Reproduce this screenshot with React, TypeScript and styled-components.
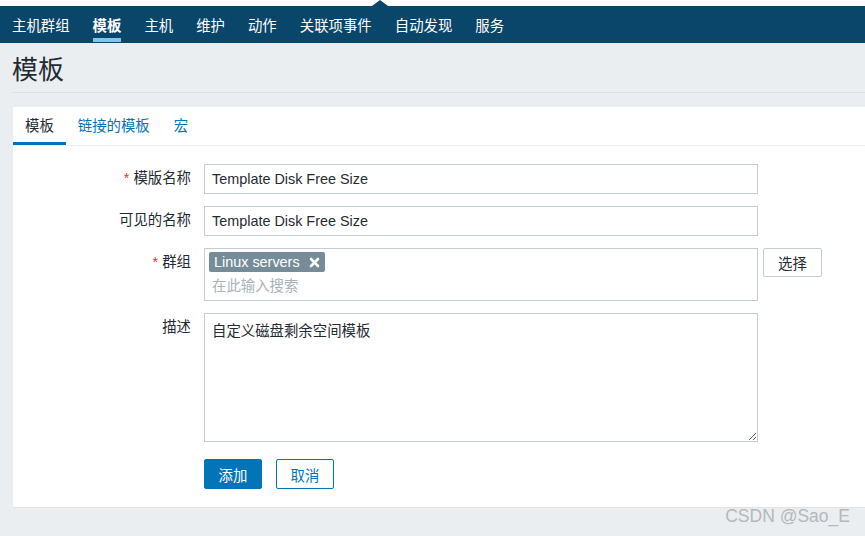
import React from 'react'
import styled, { createGlobalStyle } from 'styled-components'

const GlobalStyle = createGlobalStyle`
    html, body {
        margin: 0;
        padding: 0;
        background: #ebeef0;
    }
    body {
        font-family: "Liberation Sans", "Noto Sans CJK SC", Arial, sans-serif;
        font-size: 14.4px;
        color: #1f2c33;
    }
`

const PAGE = styled.div`
    position: relative;
    min-height: 536px;
    padding-top: 6px;
    background: linear-gradient(#ffffff 0, #ffffff 6px, #ebeef0 6px);
    box-sizing: border-box;
`

const NAVBAR = styled.nav`
    position: relative;
    display: flex;
    align-items: stretch;
    height: 37px;
    padding-left: 12px;
    background: #0a466a;
`

const NOTCH = styled.div`
    position: absolute;
    left: 372px;
    top: -6px;
    width: 0;
    height: 0;
    border-left: 8px solid transparent;
    border-right: 8px solid transparent;
    border-bottom: 6px solid #0a466a;
`

const NAVITEM = styled.a<{ active?: boolean }>`
    position: relative;
    display: flex;
    align-items: center;
    margin-right: 23px;
    font-size: 14.4px;
    color: #ffffff;
    font-weight: ${props => props.active ? 'bold' : 'normal'};
    text-decoration: none;
    cursor: pointer;

    &::after {
        content: '';
        display: ${props => props.active ? 'block' : 'none'};
        position: absolute;
        left: 0;
        right: 0;
        bottom: 1px;
        height: 4px;
        background: #7cc7f0;
    }
`

const MAIN = styled.main`
    padding-left: 12px;
`

const HEADER = styled.header`
    display: flex;
    align-items: center;
    height: 49px;
    border-bottom: 1px solid #dbe1e5;
`

const TITLE = styled.h1`
    margin: 0;
    font-size: 26px;
    font-weight: normal;
    color: #1f2c33;
`

const CARD = styled.section`
    margin: 14px 0 0 1px;
    background: #ffffff;
    border-bottom: 1px solid #dde3e6;
    padding-bottom: 18px;
`

const TABBAR = styled.div`
    display: flex;
    height: 38px;
    border-bottom: 1px solid #ebeef0;
`

const TAB = styled.a<{ active?: boolean }>`
    display: flex;
    align-items: center;
    padding: 0 12px;
    font-size: 14.4px;
    color: ${props => props.active ? '#1f2c33' : '#0275b8'};
    border-bottom: 3px solid ${props => props.active ? '#0275b8' : 'transparent'};
    cursor: pointer;
`

const FORM = styled.div`
    display: grid;
    grid-template-columns: 178px 554px auto;
    column-gap: 13px;
    row-gap: 12px;
    padding-top: 18px;
    align-items: start;
`

const LABEL = styled.label`
    text-align: right;
    line-height: 29px;
    font-size: 14.4px;
    color: #1f2c33;
`

const REQUIRED = styled.span`
    color: #e33734;
    margin-right: 4px;
`

const TEXTINPUT = styled.input`
    box-sizing: border-box;
    width: 100%;
    height: 30px;
    margin: 0;
    padding: 0 7px;
    border: 1px solid #c3ccd1;
    font-family: inherit;
    font-size: 14.4px;
    color: #1f2c33;
    background: #ffffff;
    outline: none;
`

const MULTISELECT = styled.div`
    box-sizing: border-box;
    height: 53px;
    padding: 3px 4px;
    border: 1px solid #c3ccd1;
    display: flex;
    flex-direction: column;
    gap: 3px;
`

const TAG = styled.span`
    align-self: flex-start;
    display: inline-flex;
    align-items: center;
    gap: 9px;
    height: 22px;
    padding: 0 5px 0 5px;
    border-radius: 2px;
    background: #768d99;
    color: #ffffff;
    font-size: 14.4px;
`

const PLACEHOLDER = styled.span`
    padding-left: 3px;
    line-height: 22px;
    color: #a8b3b9;
    font-size: 14.4px;
`

const SELECTBUTTON = styled.button`
    box-sizing: border-box;
    justify-self: start;
    margin-left: -8px;
    width: 59px;
    height: 29px;
    border: 1px solid #c3ccd1;
    border-radius: 2px;
    background: #ffffff;
    font-family: inherit;
    font-size: 14.4px;
    color: #1f2c33;
`

const TEXTAREA = styled.textarea`
    box-sizing: border-box;
    display: block;
    width: 100%;
    height: 129px;
    margin: 0;
    padding: 5px 7px;
    border: 1px solid #c3ccd1;
    font-family: inherit;
    font-size: 14.4px;
    color: #1f2c33;
    resize: both;
    outline: none;
`

const BUTTONROW = styled.div`
    grid-column: 2;
    display: flex;
    gap: 14px;
    margin-top: 5px;
`

const BUTTON = styled.button<{ primary?: boolean }>`
    box-sizing: border-box;
    width: 58px;
    height: 30px;
    border-radius: 2px;
    border: 1px solid #0275b8;
    background: ${props => props.primary ? '#0275b8' : '#ffffff'};
    color: ${props => props.primary ? '#ffffff' : '#0275b8'};
    font-family: inherit;
    font-size: 14.4px;
    cursor: pointer;
`

const WATERMARK = styled.div`
    position: absolute;
    right: 15px;
    bottom: 9px;
    font-family: "Liberation Sans", Arial, sans-serif;
    font-size: 17.5px;
    color: #b4b8bb;
`

const CloseIcon = () => (
    <svg width="11" height="11" viewBox="0 0 11 11">
        <path d="M2 2 L9 9 M9 2 L2 9" stroke="#ffffff" strokeWidth="2.6" strokeLinecap="round" />
    </svg>
)

const NAV = ['主机群组', '模板', '主机', '维护', '动作', '关联项事件', '自动发现', '服务']

export default function App() {
    return (
        <PAGE>
            <GlobalStyle />
            <NAVBAR>
                <NOTCH />
                {NAV.map(name => (
                    <NAVITEM key={name} active={name === '模板'}>{name}</NAVITEM>
                ))}
            </NAVBAR>
            <MAIN>
                <HEADER>
                    <TITLE>模板</TITLE>
                </HEADER>
                <CARD>
                    <TABBAR>
                        <TAB active>模板</TAB>
                        <TAB>链接的模板</TAB>
                        <TAB>宏</TAB>
                    </TABBAR>
                    <FORM>
                        <LABEL><REQUIRED>*</REQUIRED>模版名称</LABEL>
                        <TEXTINPUT value="Template Disk Free Size" readOnly />
                        <span />

                        <LABEL>可见的名称</LABEL>
                        <TEXTINPUT value="Template Disk Free Size" readOnly />
                        <span />

                        <LABEL><REQUIRED>*</REQUIRED>群组</LABEL>
                        <MULTISELECT>
                            <TAG>Linux servers <CloseIcon /></TAG>
                            <PLACEHOLDER>在此输入搜索</PLACEHOLDER>
                        </MULTISELECT>
                        <SELECTBUTTON>选择</SELECTBUTTON>

                        <LABEL>描述</LABEL>
                        <TEXTAREA value="自定义磁盘剩余空间模板" readOnly />
                        <span />

                        <BUTTONROW>
                            <BUTTON primary>添加</BUTTON>
                            <BUTTON>取消</BUTTON>
                        </BUTTONROW>
                    </FORM>
                </CARD>
            </MAIN>
            <WATERMARK>CSDN @Sao_E</WATERMARK>
        </PAGE>
    )
}
